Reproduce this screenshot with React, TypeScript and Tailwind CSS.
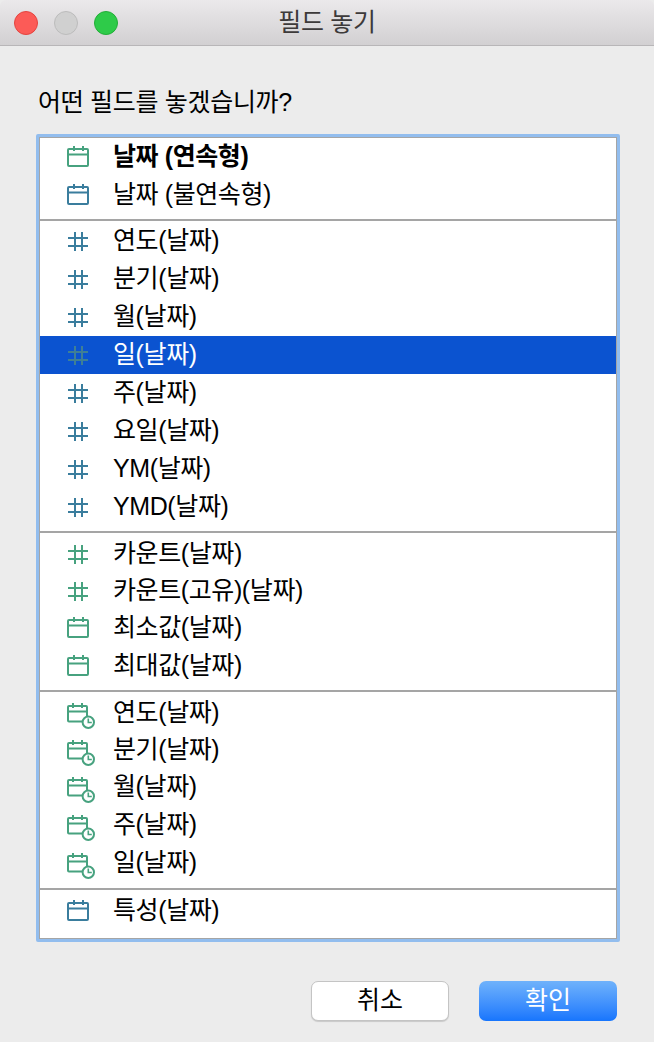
const FONT = "font-['Liberation_Sans','Noto_Sans_CJK_KR',sans-serif]";

const GREEN = "#47a27f";
const BLUE = "#3a7d9d";

type IconKind = "cal" | "hash" | "calclock";

type Row = {
  label: string;
  icon: IconKind;
  color: string;
  h: number;
  bold?: boolean;
  selected?: boolean;
};

const groups: { rows: Row[]; pad: string }[] = [
  {
    pad: "pb-[5px]",
    rows: [
      { label: "날짜 (연속형)", icon: "cal", color: GREEN, h: 38, bold: true },
      { label: "날짜 (불연속형)", icon: "cal", color: BLUE, h: 38 },
    ],
  },
  {
    pad: "pt-[1px] pb-[5px]",
    rows: [
      { label: "연도(날짜)", icon: "hash", color: BLUE, h: 38 },
      { label: "분기(날짜)", icon: "hash", color: BLUE, h: 38 },
      { label: "월(날짜)", icon: "hash", color: BLUE, h: 38 },
      { label: "일(날짜)", icon: "hash", color: "#3f7f95", h: 38, selected: true },
      { label: "주(날짜)", icon: "hash", color: BLUE, h: 38 },
      { label: "요일(날짜)", icon: "hash", color: BLUE, h: 38 },
      { label: "YM(날짜)", icon: "hash", color: BLUE, h: 38 },
      { label: "YMD(날짜)", icon: "hash", color: BLUE, h: 38 },
    ],
  },
  {
    pad: "pt-[2px] pb-[5px]",
    rows: [
      { label: "카운트(날짜)", icon: "hash", color: GREEN, h: 38 },
      { label: "카운트(고유)(날짜)", icon: "hash", color: GREEN, h: 36 },
      { label: "최소값(날짜)", icon: "cal", color: GREEN, h: 38 },
      { label: "최대값(날짜)", icon: "cal", color: GREEN, h: 38 },
    ],
  },
  {
    pad: "pt-[2px] pb-[6px]",
    rows: [
      { label: "연도(날짜)", icon: "calclock", color: GREEN, h: 38 },
      { label: "분기(날짜)", icon: "calclock", color: GREEN, h: 36 },
      { label: "월(날짜)", icon: "calclock", color: GREEN, h: 38 },
      { label: "주(날짜)", icon: "calclock", color: GREEN, h: 38 },
      { label: "일(날짜)", icon: "calclock", color: GREEN, h: 38 },
    ],
  },
  {
    pad: "pt-[2px] pb-[6px]",
    rows: [{ label: "특성(날짜)", icon: "cal", color: BLUE, h: 38 }],
  },
];

const RowIcon = ({ kind, color }: { kind: IconKind; color: string }) => {
  if (kind === "hash") {
    return (
      <svg width="24" height="22" viewBox="0 0 24 22" fill="none" stroke={color} strokeWidth="2">
        <path d="M9 2v19M16 2v19M2 8h20M2 16h20" />
      </svg>
    );
  }
  if (kind === "cal") {
    return (
      <svg width="24" height="22" viewBox="0 0 24 22" fill="none" stroke={color} strokeWidth="2">
        <rect x="2" y="3" width="20" height="17" rx="1" />
        <path d="M2 8.5h20M8 0v5M17 0v5" />
      </svg>
    );
  }
  return (
    <svg width="30" height="32" viewBox="0 0 30 32" fill="none" stroke={color} strokeWidth="2">
      <path d="M17 24.5H3a1 1 0 0 1-1-1V10a1 1 0 0 1 1-1h17a1 1 0 0 1 1 1v9" />
      <path d="M2 14.5h19M7 6v5M16 6v5" />
      <circle cx="22.3" cy="25.3" r="5.7" fill="#fff" />
      <path d="M22.3 21.5v4h3.5" strokeWidth="1.6" />
    </svg>
  );
};

const ListRow = ({ row }: { row: Row }) => (
  <div
    className={`flex items-center ${row.selected ? "bg-[#0b53d0] text-white" : "text-black"} ${row.bold ? "font-bold" : ""}`}
    style={{ height: row.h }}
  >
    <div className="ml-[26px] w-[47px] h-full shrink-0 flex items-center">
      <RowIcon kind={row.icon} color={row.color} />
    </div>
    <span className="text-[25px] leading-none pb-[1px] tracking-[-0.4px] whitespace-nowrap">{row.label}</span>
  </div>
);

export default function App() {
  return (
    <div className={`w-[654px] h-[1042px] bg-[#ececec] flex flex-col ${FONT}`}>
      {/* title bar */}
      <div className="relative h-[46px] shrink-0 flex items-center rounded-t-[6px] border-b border-[#b8b6b8] bg-gradient-to-b from-[#ebe9eb] to-[#d2d0d2] pl-[14px] gap-[16px]">
        <span className="w-6 h-6 rounded-full bg-[#fc5b57] border border-[#e4443f]" />
        <span className="w-6 h-6 rounded-full bg-[#d0d0d0] border border-[#bcbcbc]" />
        <span className="w-6 h-6 rounded-full bg-[#2ecb49] border border-[#22ae38]" />
        <span className="absolute inset-x-0 text-center text-[25px] leading-none tracking-[-0.3px] text-[#3d3a3a]">
          필드 놓기
        </span>
      </div>

      {/* prompt */}
      <div className="pl-[38px] pt-[41px] h-[88px] shrink-0 text-[25px] leading-[30px] tracking-[-0.3px] text-black">
        어떤 필드를 놓겠습니까?
      </div>

      {/* list */}
      <div className="mx-[36px] w-[584px] h-[808px] shrink-0 rounded-[2px] border-[3px] border-[#92bdee]">
        <div className="h-full bg-white border border-[#a5a5a5] flex flex-col">
          {groups.map((group, i) => (
            <div key={i} className={`${group.pad} ${i < groups.length - 1 ? "border-b-2 border-[#a5a5a5]" : ""}`}>
              {group.rows.map((row, j) => (
                <ListRow key={j} row={row} />
              ))}
            </div>
          ))}
        </div>
      </div>

      {/* buttons */}
      <div className="flex justify-end gap-[30px] pr-[37px] pt-[39px]">
        <button className="w-[138px] h-[40px] pb-[2px] rounded-[7px] bg-white border border-[#c4c4c4] shadow-[0_1px_1px_rgba(0,0,0,0.15)] text-[25px] leading-none text-black">
          취소
        </button>
        <button className="w-[138px] h-[40px] pb-[2px] rounded-[7px] bg-gradient-to-b from-[#6fb2fb] to-[#1675fd] text-[25px] leading-none text-white">
          확인
        </button>
      </div>
    </div>
  );
}
